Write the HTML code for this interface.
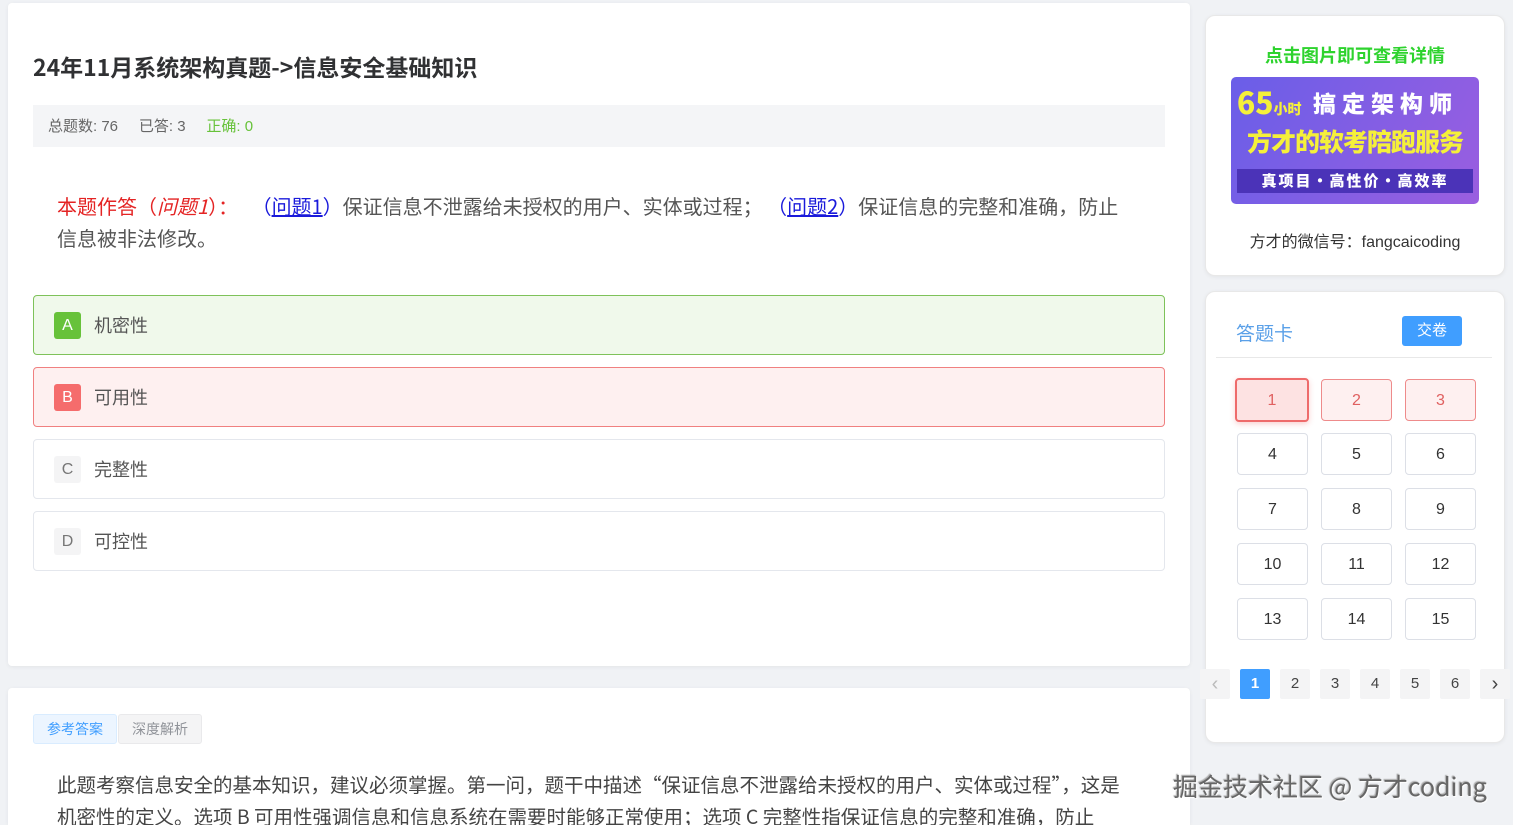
<!DOCTYPE html>
<html><head><meta charset="utf-8"><style>
*{box-sizing:border-box;margin:0;padding:0}
html,body{width:1513px;height:825px;overflow:hidden}
body{background:#f0f2f5;font-family:"Liberation Sans","Noto Sans CJK SC",sans-serif;position:relative;color:#333}
.card{position:absolute;background:#fff;border-radius:4px;box-shadow:0 1px 4px rgba(0,0,0,.06)}
.opt{position:absolute;left:33px;width:1132px;height:60px;border:1px solid #e4e7ed;border-radius:4px;font-size:18px;color:#555}
.opt .l{position:absolute;left:20px;top:16px;width:27px;height:27px;border-radius:3px;text-align:center;line-height:27px;font-size:16px;color:#777;background:#f4f4f5}
.opt .t{position:absolute;left:60px;top:16px;font-family:"Noto Sans CJK SC",sans-serif}
.g{position:absolute;width:71px;height:42px;border:1px solid #dcdfe6;border-radius:4px;text-align:center;line-height:42px;font-size:16px;color:#333}
.p{position:absolute;top:669px;width:30px;height:30px;background:#f4f4f5;border-radius:2px;text-align:center;line-height:30px;font-size:15px;color:#444}
</style></head><body>
<div class="card" style="left:8px;top:3px;width:1182px;height:663px">
<div style="position:absolute;left:25px;top:46px;font-size:23px;font-weight:bold;color:#303133;font-family:'Noto Sans CJK SC',sans-serif">24年11月系统架构真题-&gt;信息安全基础知识</div>
<div style="position:absolute;left:25px;top:102px;width:1132px;height:42px;background:#f4f5f7;font-size:15px;line-height:44px;padding-left:15px;color:#666">总题数: 76 &nbsp;&nbsp;&nbsp; 已答: 3 &nbsp;&nbsp;&nbsp; <span style="color:#67c23a">正确: 0</span></div>
<div style="position:absolute;left:49px;top:187px;width:1078px;font-size:20px;line-height:32px;color:#555;font-family:'Noto Sans CJK SC',sans-serif"><span style="color:#e42424">本题作答（<i>问题1</i>）：</span>&nbsp;&nbsp; <span style="color:#1a1adb">（<u>问题1</u>）</span>保证信息不泄露给未授权的用户、实体或过程； <span style="color:#1a1adb">（<u>问题2</u>）</span>保证信息的完整和准确，防止信息被非法修改。</div>
</div>
<div class="opt" style="top:295px;background:#f0f9eb;border-color:#7ec25a"><div class="l" style="background:#67c23a;color:#fff">A</div><div class="t">机密性</div></div>
<div class="opt" style="top:367px;background:#fef0f0;border-color:#f08080"><div class="l" style="background:#f56c6c;color:#fff">B</div><div class="t">可用性</div></div>
<div class="opt" style="top:439px"><div class="l">C</div><div class="t">完整性</div></div>
<div class="opt" style="top:511px"><div class="l">D</div><div class="t">可控性</div></div>

<div class="card" style="left:8px;top:688px;width:1182px;height:137px;border-radius:4px 4px 0 0">
<div style="position:absolute;left:25px;top:26px;width:84px;height:30px;background:#ecf5ff;border:1px solid #d9ecff;border-radius:3px;color:#409eff;font-size:14px;line-height:28px;text-align:center">参考答案</div>
<div style="position:absolute;left:110px;top:26px;width:84px;height:30px;background:#f4f4f5;border:1px solid #e9e9eb;border-radius:3px;color:#909399;font-size:14px;line-height:28px;text-align:center">深度解析</div>
<div style="position:absolute;left:49px;top:80px;width:1078px;font-size:19.5px;line-height:32px;color:#444;font-family:'Noto Sans CJK SC',sans-serif">此题考察信息安全的基本知识，建议必须掌握。第一问，题干中描述“保证信息不泄露给未授权的用户、实体或过程”，这是机密性的定义。选项 B 可用性强调信息和信息系统在需要时能够正常使用；选项 C 完整性指保证信息的完整和准确，防止</div>
</div>

<div class="card" style="left:1205px;top:15px;width:300px;height:261px;border:1px solid #e8e8e8;border-radius:10px">
<div style="position:absolute;left:0;width:100%;top:26px;text-align:center;color:#2ed32e;font-weight:bold;font-size:18px;font-family:'Noto Sans CJK SC',sans-serif">点击图片即可查看详情</div>
<div style="position:absolute;left:25px;top:61px;width:248px;height:127px;border-radius:5px;background:linear-gradient(120deg,#6a5ee8,#9a5ee0);overflow:hidden;font-family:'Noto Sans CJK SC',sans-serif;font-weight:900;white-space:nowrap">
<div style="position:absolute;left:6px;top:2px;font-size:30px;color:#f5f03a">65<span style="font-size:14px">小时</span></div>
<div style="position:absolute;left:82px;top:8px;font-size:23px;color:#fff;letter-spacing:6px">搞定架构师</div>
<div style="position:absolute;left:0;width:248px;text-align:center;top:46px;font-size:25px;color:#f5f03a;letter-spacing:-1px">方才的软考陪跑服务</div>
<div style="position:absolute;left:6px;top:92px;width:236px;height:24px;background:#4b33b8;color:#fff;font-size:15px;text-align:center;line-height:24px;letter-spacing:2px">真项目·高性价·高效率</div>
</div>
<div style="position:absolute;left:0;width:100%;top:212px;text-align:center;font-size:16px;color:#333">方才的微信号：fangcaicoding</div>
</div>

<div class="card" style="left:1205px;top:291px;width:300px;height:452px;border:1px solid #e8e8e8;border-radius:10px"></div>
<div style="position:absolute;left:1236px;top:319px;font-size:19px;color:#5aa0e8;font-family:'Noto Sans CJK SC',sans-serif">答题卡</div>
<div style="position:absolute;left:1402px;top:316px;width:60px;height:30px;background:#409eff;border-radius:3px;color:#fff;font-size:15px;text-align:center;line-height:30px">交卷</div>
<div style="position:absolute;left:1216px;top:357px;width:276px;height:1px;background:#e8e8e8"></div>
<div class="g" style="left:1235px;top:378px;width:74px;height:44px;background:#fde2e2;border:2px solid #ee6b6b;color:#e06060;box-shadow:0 2px 6px rgba(240,100,100,.3)">1</div>
<div class="g" style="left:1321px;top:379px;background:#fef0f0;border-color:#ee8b8b;color:#e06060">2</div>
<div class="g" style="left:1405px;top:379px;background:#fef0f0;border-color:#ee8b8b;color:#e06060">3</div>
<div class="g" style="left:1237px;top:433px">4</div><div class="g" style="left:1321px;top:433px">5</div><div class="g" style="left:1405px;top:433px">6</div>
<div class="g" style="left:1237px;top:488px">7</div><div class="g" style="left:1321px;top:488px">8</div><div class="g" style="left:1405px;top:488px">9</div>
<div class="g" style="left:1237px;top:543px">10</div><div class="g" style="left:1321px;top:543px">11</div><div class="g" style="left:1405px;top:543px">12</div>
<div class="g" style="left:1237px;top:598px">13</div><div class="g" style="left:1321px;top:598px">14</div><div class="g" style="left:1405px;top:598px">15</div>
<div class="p" style="left:1200px;color:#bbb;font-size:20px">‹</div>
<div class="p" style="left:1240px;background:#409eff;color:#fff;font-weight:bold">1</div>
<div class="p" style="left:1280px">2</div><div class="p" style="left:1320px">3</div><div class="p" style="left:1360px">4</div><div class="p" style="left:1400px">5</div><div class="p" style="left:1440px">6</div>
<div class="p" style="left:1480px;font-size:20px">›</div>
<div style="position:absolute;left:1173px;top:768px;font-size:25px;color:#666;text-shadow:1px 1px 1px #fff,-1px -1px 1px #aaa;font-family:'Noto Sans CJK SC',sans-serif">掘金技术社区 @ 方才coding</div>
</body></html>
